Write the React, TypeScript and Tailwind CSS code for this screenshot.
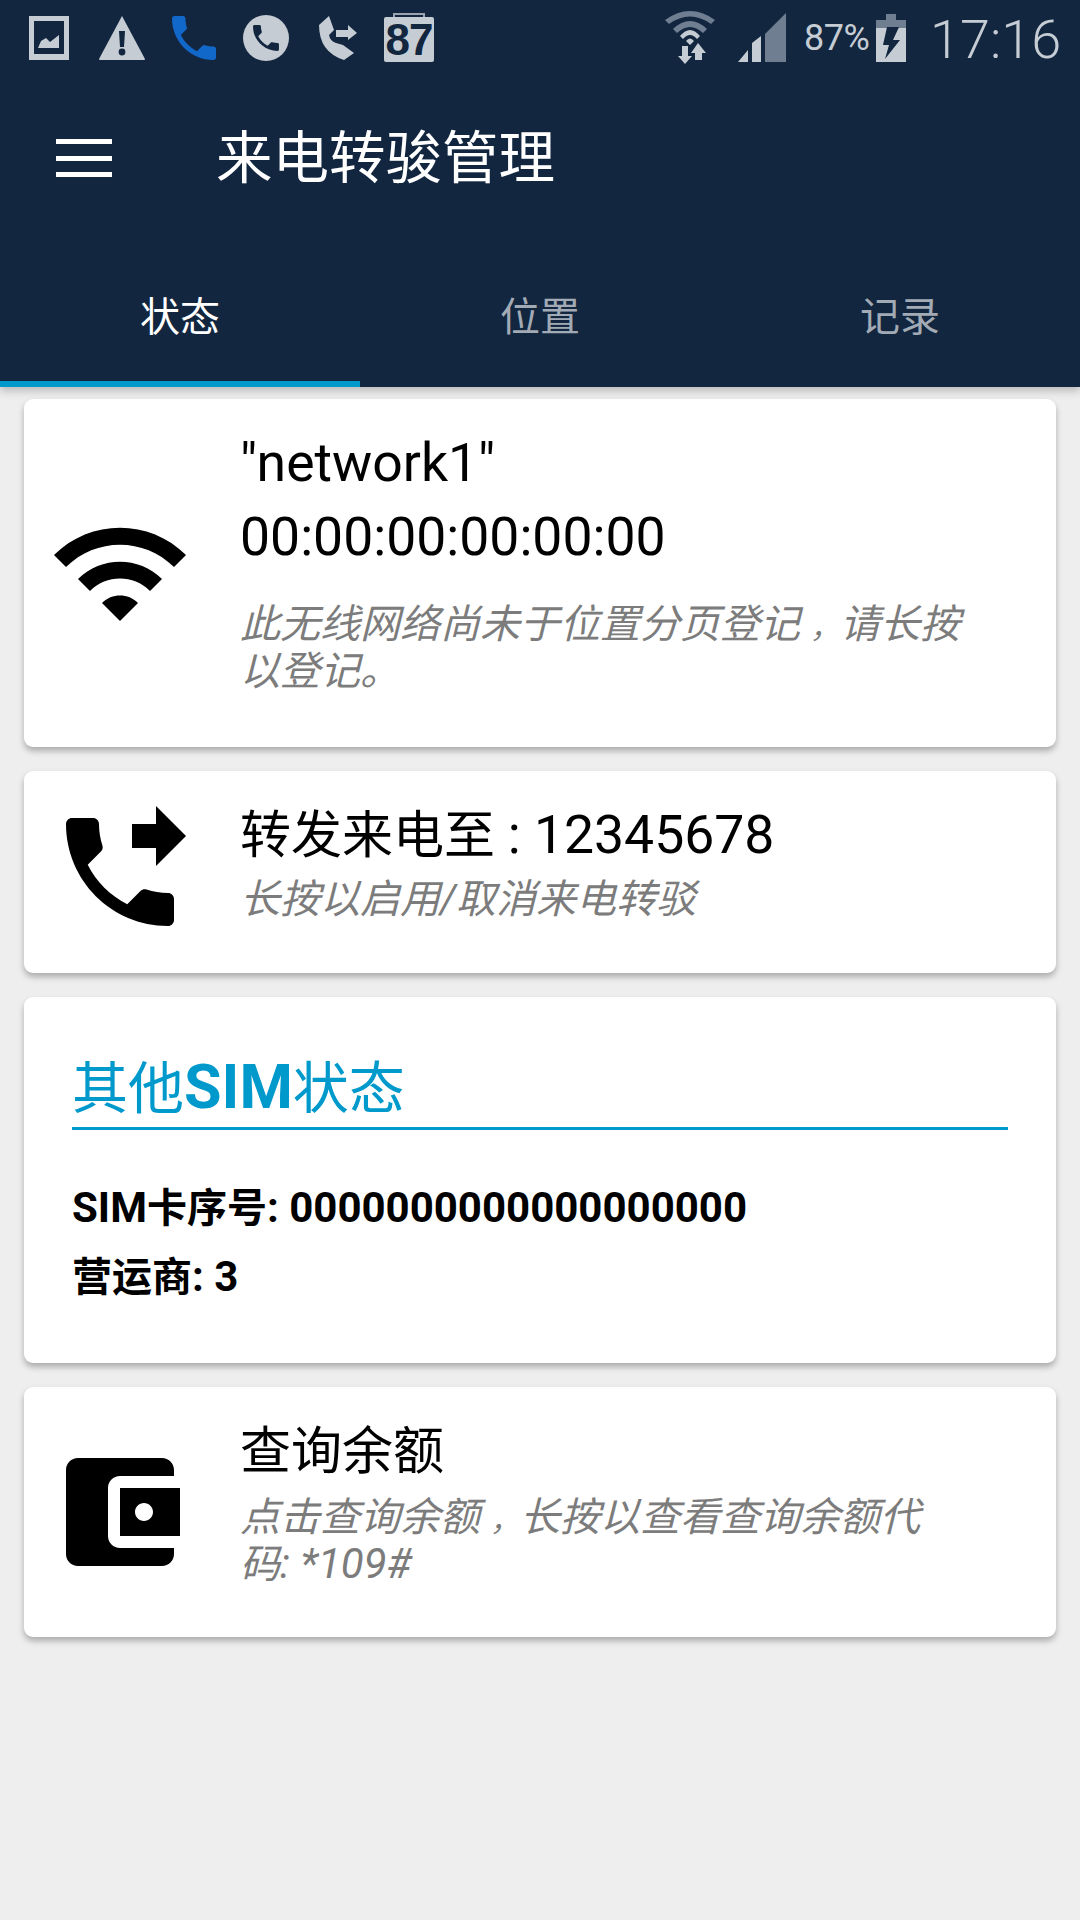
const CJK = "font-['Roboto','Noto_Sans_CJK_SC',sans-serif]";

function MIcon({ d }: { d: string }) {
  return (
    <svg viewBox="0 0 24 24" className="w-[144px] h-[144px] shrink-0" fill="#000">
      <path d={d} />
    </svg>
  );
}

const WIFI = "M1 9l2 2c4.97-4.97 13.03-4.97 18 0l2-2C16.93 2.93 7.08 2.93 1 9zm8 8l3 3 3-3c-1.65-1.66-4.34-1.66-6 0zm-4-4l2 2c2.76-2.76 7.24-2.76 10 0l2-2C15.14 9.14 8.87 9.14 5 13z";
const FORWARD = "M18 11l5-5-5-5v3h-4v4h4v3zm2 4.5c-1.25 0-2.45-.2-3.57-.57-.35-.11-.74-.03-1.02.24l-2.2 2.2c-2.83-1.44-5.15-3.75-6.59-6.59l2.2-2.21c.28-.26.36-.65.25-1C8.7 6.45 8.5 5.25 8.5 4c0-.55-.45-1-1-1H4c-.55 0-1 .45-1 1 0 9.39 7.61 17 17 17 .55 0 1-.45 1-1v-3.5c0-.55-.45-1-1-1z";
const WALLET = "M21 18v1c0 1.1-.9 2-2 2H5c-1.11 0-2-.9-2-2V5c0-1.1.89-2 2-2h14c1.1 0 2 .9 2 2v1h-9c-1.11 0-2 .9-2 2v8c0 1.1.89 2 2 2h9zm-9-2h10V8H12v8zm4-2.5c-.83 0-1.5-.67-1.5-1.5s.67-1.5 1.5-1.5 1.5.67 1.5 1.5-.67 1.5-1.5 1.5z";
const PHONE = "M20 15.5c-1.25 0-2.45-.2-3.57-.57-.35-.11-.74-.03-1.02.24l-2.2 2.2c-2.83-1.44-5.15-3.75-6.59-6.59l2.2-2.21c.28-.26.36-.65.25-1C8.7 6.45 8.5 5.25 8.5 4c0-.55-.45-1-1-1H4c-.55 0-1 .45-1 1 0 9.39 7.61 17 17 17 .55 0 1-.45 1-1v-3.5c0-.55-.45-1-1-1z";

const GR = "#c5ccd4";

function StatusBar() {
  return (
    <div className="h-[75px] flex items-center text-[#c5ccd4]">
      <svg viewBox="0 0 40 44" className="w-[40px] h-[44px] ml-[29px]">
        <path fill={GR} d="M0 0h40v44H0z" />
        <path fill="#12263f" d="M5 5h30v33H5z" />
        <path fill={GR} d="M9 32l3-7 5-3 4 4 9-7v13z" />
      </svg>
      <svg viewBox="0 0 48 44" className="w-[48px] h-[44px] ml-[29px]">
        <path fill={GR} d="M24 0l23 43q0 1-1 1H2q-1 0-1-1z" />
        <path fill="#12263f" d="M21 15h6l-1 16h-4z" />
        <circle cx="24" cy="36" r="3.4" fill="#12263f" />
      </svg>
      <svg viewBox="3 3 18 18" className="w-[44px] h-[44px] ml-[26px]">
        <path fill="#1268c8" d={PHONE} />
      </svg>
      <svg viewBox="0 0 46 46" className="w-[46px] h-[46px] ml-[27px]">
        <circle cx="23" cy="23" r="23" fill={GR} />
        <g transform="translate(5.700 5.700) scale(1.440)">
          <path fill="#12263f" d={PHONE} />
        </g>
      </svg>
      <svg viewBox="0 0 38 44" className="w-[38px] h-[44px] ml-[30px]">
        <path fill={GR} d="M0 9L10 0l5 14-5 5Q11 25 17 27l7 2 11 8-10 7Q0 36 0 9z" />
        <path fill={GR} d="M17 14h12V9l9 8-9 7v-3H17z" />
      </svg>
      <div className="relative w-[50px] h-[49px] ml-[27px]">
        <div className="absolute left-[9px] top-0 w-[32px] h-[5px] border-2 border-b-0 border-[#9aa3ae]" />
        <div className="absolute left-0 right-0 top-[4px] bottom-0 rounded-[2px] bg-[#c5ccd4] flex items-center justify-center text-[#12263f] text-[44px] leading-none font-bold font-['Liberation_Sans',sans-serif] tracking-[-1px]">
          87
        </div>
      </div>
      <svg viewBox="0 0 50 54" className="w-[50px] h-[54px] ml-[231px]">
        <path fill="#6f7f91" d="M0 9Q25-9 50 9l-4 4Q25-2 4 13z" />
        <path fill="#6f7f91" d="M8 18Q25 2 42 18l-4 4Q25 10 12 22z" />
        <path fill={GR} d="M15 25Q25 13 35 25l-3 3Q25 20 18 28z" />
        <path fill={GR} d="M21 30Q25 25 29 30l-4 4z" />
        <path fill={GR} d="M17 35h6v10h4l-7 8-7-8h4z" />
        <path fill={GR} d="M33 32l8 10h-4v7h-7v-7h-4z" />
      </svg>
      <svg viewBox="0 0 48 49" className="w-[48px] h-[49px] ml-[23px]">
        <path fill="#6f7f91" d="M48 0v49H27V21z" />
        <path fill={GR} d="M14 30v19h9V23zM0 49h10V37z" />
      </svg>
      <span className="ml-[18px] w-[66px] text-[36px] leading-none font-['Roboto',sans-serif] font-normal tracking-[-0.5px]">87%</span>
      <svg viewBox="0 0 30 48" className="w-[30px] h-[48px] ml-[6px]">
        <path fill="#6f7f91" d="M10 0h10v6h10v8H0V6h10z" />
        <path fill={GR} d="M0 14h30v34H0z" />
        <path fill="#12263f" d="M11 13h12l-6 13h7L9 45l4-14H7z" />
      </svg>
      <span className="ml-[24px] mt-[4px] text-[54px] leading-none font-['Roboto',sans-serif] font-light">17:16</span>
    </div>
  );
}

function Header() {
  return (
    <header className="relative h-[387px] bg-[#12263f] flex flex-col shadow-[0_4px_8px_rgba(0,0,0,0.22)]">
      <StatusBar />
      <div className="h-[168px] flex items-center">
        <svg viewBox="0 0 56 38" className="w-[56px] h-[38px] ml-[56px] -mt-[3px]">
          <path fill="#fff" d="M0 0h56v5H0zM0 17h56v5H0zM0 33h56v5H0z" />
        </svg>
        <span className="ml-[104px] text-[56.500px] leading-none text-white">来电转骏管理</span>
      </div>
      <div className="flex-1 flex">
        {["状态", "位置", "记录"].map((t, i) => (
          <div
            key={t}
            className={
              i === 0
                ? "w-[360px] flex items-center justify-center pt-[11px] text-[40px] leading-none text-white border-b-[6px] border-[#0099cc]"
                : "w-[360px] flex items-center justify-center pt-[5px] text-[40px] leading-none text-[#a2abb5]"
            }
          >
            {t}
          </div>
        ))}
      </div>
    </header>
  );
}

const CARD = "bg-white rounded-[9px] shadow-[0_4px_6px_rgba(0,0,0,0.28)]";
const SUB = "text-[40px] leading-[47px] italic text-[#7c7c7c]";
const TITLE = "text-[51px] text-black";
const T = "text-[53.5px]";
const S = "text-[42px] leading-none";
const B = "text-[42px] leading-none";
const COMMA = "ml-[10px] text-[30px] leading-none";

export default function App() {
  return (
    <div className={`w-[1080px] h-[1920px] bg-[#eeeeee] overflow-hidden ${CJK}`}>
      <Header />
      <main className="px-6 pt-[12px] flex flex-col gap-6">
        <section className={`${CARD} h-[348px] pl-6 flex items-center`}>
          <MIcon d={WIFI} />
          <div className="ml-[48px] pb-[26px]">
            <div className={`${TITLE} leading-[73px]`}><span className={T}>"network1"</span></div>
            <div className={`${TITLE} leading-[73px]`}><span className={T}>00:00:00:00:00:00</span></div>
            <div className={`${SUB} mt-[27px]`}>
              此无线网络尚未于位置分页登记<span className={COMMA}>，</span>请长按
              <br />
              以登记。
            </div>
          </div>
        </section>
        <section className={`${CARD} h-[202px] pl-6 flex items-center`}>
          <MIcon d={FORWARD} />
          <div className="ml-[48px] pb-[21px]">
            <div className={`${TITLE} leading-[70px]`}>转发来电至 <span className={T}>: 12345678</span></div>
            <div className={`${SUB} mt-[5px]`}>长按以启用/取消来电转驳</div>
          </div>
        </section>
        <section className={`${CARD} h-[366px] px-12 pt-[56px]`}>
          <div className="h-[77px] border-b-[3px] border-[#0099cc] text-[56px] leading-[72px] font-normal text-[#0099cc]">
            其他<span className="text-[61px] leading-none font-bold">SIM</span>状态
          </div>
          <div className="mt-[44px] text-[40px] leading-[70px] font-bold text-black">
            <div className="h-[69px]"><span className={B}>SIM</span>卡序号<span className={B}>: 0000000000000000000</span></div>
            <div className="h-[70px]">营运商<span className={B}>: 3</span></div>
          </div>
        </section>
        <section className={`${CARD} h-[250px] pl-6 flex items-center`}>
          <MIcon d={WALLET} />
          <div className="ml-[48px] pb-[20px]">
            <div className={`${TITLE} leading-[70px]`}>查询余额</div>
            <div className={`${SUB} mt-[7px]`}>
              点击查询余额<span className={COMMA}>，</span>长按以查看查询余额代
              <br />
              码<span className={S}>: *109#</span>
            </div>
          </div>
        </section>
      </main>
    </div>
  );
}
